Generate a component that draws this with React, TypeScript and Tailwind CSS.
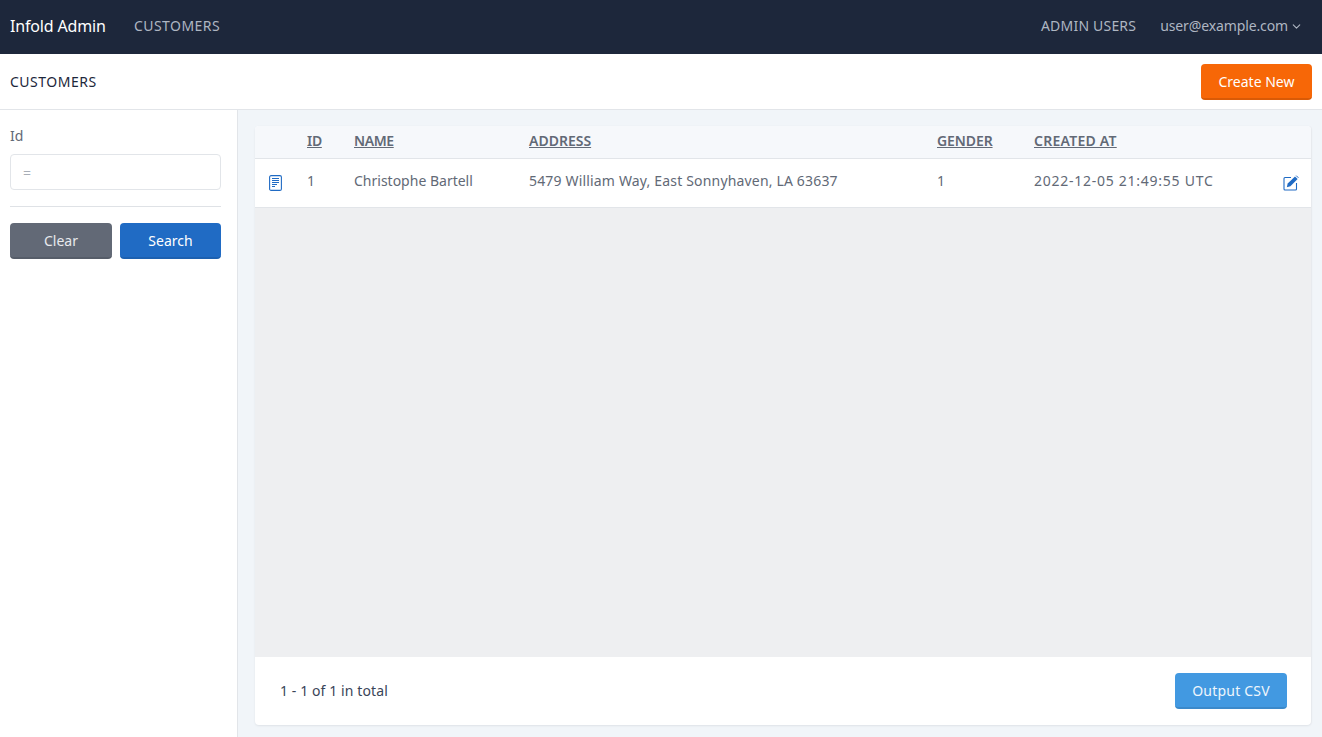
import React from 'react';
import { ChevronDown } from 'lucide-react';

const DocIcon = () => (
  <svg width="13" height="16" viewBox="0 0 13 16" fill="none" stroke="#206bc4" strokeWidth="1" className="block">
    <rect x="0.6" y="0.6" width="11.8" height="14.8" rx="1.5" strokeWidth="1.1" />
    <path d="M3 3.5h7M3 5.5h7M3 7.5h7M3 9.5h5M3 11.5h3" />
  </svg>
);

const EditIcon = () => (
  <svg width="16" height="16" viewBox="0 0 16 16" fill="none" className="block">
    <path d="M8 2.5H2a1 1 0 0 0-1 1V14a1 1 0 0 0 1 1h10.5a1 1 0 0 0 1-1V8" stroke="#206bc4" strokeWidth="1.1" />
    <path d="M3.8 12.2l.9-3.6L12 1.4l2.6 2.6-7.2 7.3z" fill="#206bc4" />
    <path d="M13.2 .6l2.2 2.2" stroke="#206bc4" strokeWidth="1" />
  </svg>
);

const App = () => {
  return (
    <div className="h-[737px] flex flex-col bg-[#f1f5f9] font-['Noto_Sans',sans-serif] text-[14px] text-[#1e293b] overflow-hidden">
      <header className="h-[54px] shrink-0 bg-[#1d273b] flex items-center justify-between pl-[10px] pr-[18px] text-[#aeb6c2]">
        <div className="flex items-center pb-[3px]">
          <span className="text-[16px] text-white w-[124px] tracking-[-0.17px] pt-[1px]">Infold Admin</span>
          <span className="tracking-[0.45px]">CUSTOMERS</span>
        </div>
        <div className="flex items-center pb-[3px]">
          <span className="mr-[24px] tracking-[0.2px]">ADMIN USERS</span>
          <span className="tracking-[-0.12px]">user@example.com</span>
          <ChevronDown className="w-[13px] h-[13px] ml-[2px] mt-[2px] mr-[1px]" />
        </div>
      </header>

      <div className="h-[56px] shrink-0 bg-white border-b border-[#e2e5e9] flex items-center justify-between pl-[10px] pr-[10px]">
        <span className="text-[#1d273b] tracking-[0.5px]">CUSTOMERS</span>
        <button className="w-[111px] h-[36px] pt-[1px] rounded-[4px] bg-[#f76707] border-b-2 border-[#d95a06] text-white">Create New</button>
      </div>

      <div className="flex flex-1 min-h-0">
        <aside className="w-[238px] shrink-0 bg-white border-r border-[#e2e5e9] pl-[10px] pr-[16px] pt-[16px]">
          <label className="block text-[#626976] mb-[8px] leading-[20px]">Id</label>
          <input
            className="block w-full h-[36px] border border-[#e2e5e9] rounded-[4px] px-[12px] placeholder:text-[#a8aeb7] outline-none"
            placeholder="="
            readOnly
          />
          <div className="border-t border-[#dfe2e6] mt-[16px] mb-[16px]" />
          <div className="flex gap-[8px]">
            <button className="w-[102px] h-[36px] rounded-[4px] bg-[#626976] border-b-2 border-[#565d69] text-[#e8eaed]">Clear</button>
            <button className="w-[101px] h-[36px] rounded-[4px] bg-[#206bc4] border-b-2 border-[#1c60b0] text-white">Search</button>
          </div>
        </aside>

        <main className="flex-1 min-w-0 pt-[16px] pl-[17px] pr-[11px] pb-[12px]">
          <div className="h-full flex flex-col bg-white rounded-[4px] shadow-[0_1px_2px_#dfe3e8,1px_0_1px_#e9ecf0] overflow-hidden">
            <div className="h-[33px] shrink-0 bg-[#f6f8fb] border-b border-[#e2e5e9] flex items-center pb-[3px] text-[#626976] font-semibold">
              <span className="w-[52px]" />
              <span className="w-[47px] underline tracking-[-0.3px]">ID</span>
              <span className="w-[175px] underline tracking-[-0.4px]">NAME</span>
              <span className="w-[408px] underline">ADDRESS</span>
              <span className="w-[97px] underline tracking-[-0.1px]">GENDER</span>
              <span className="underline tracking-[0.25px]">CREATED AT</span>
            </div>
            <div className="h-[49px] shrink-0 bg-white border-b border-[#e2e5e9] flex items-center text-[#626976]">
              <span className="w-[52px] pl-[14px]"><DocIcon /></span>
              <span className="w-[47px] pb-[5px]">1</span>
              <span className="w-[175px] pb-[5px]">Christophe Bartell</span>
              <span className="w-[408px] pb-[5px] tracking-[0.17px]">5479 William Way, East Sonnyhaven, LA 63637</span>
              <span className="w-[97px] pb-[5px]">1</span>
              <span className="flex-1 pb-[5px] tracking-[0.74px]">2022-12-05 21:49:55 UTC</span>
              <span className="pr-[12px]"><EditIcon /></span>
            </div>
            <div className="flex-1 bg-[#eeeff1]" />
            <div className="h-[68px] shrink-0 flex items-center justify-between pl-[25px] pr-[24px]">
              <span className="text-[#3a4558] tracking-[0.1px] pb-[1px]">1 - 1 of 1 in total</span>
              <button className="w-[112px] h-[36px] rounded-[4px] bg-[#4299e1] border-b-2 border-[#3b89ca] text-[#eef6fc] tracking-[0.2px]">Output CSV</button>
            </div>
          </div>
        </main>
      </div>
    </div>
  );
};

export default App;
